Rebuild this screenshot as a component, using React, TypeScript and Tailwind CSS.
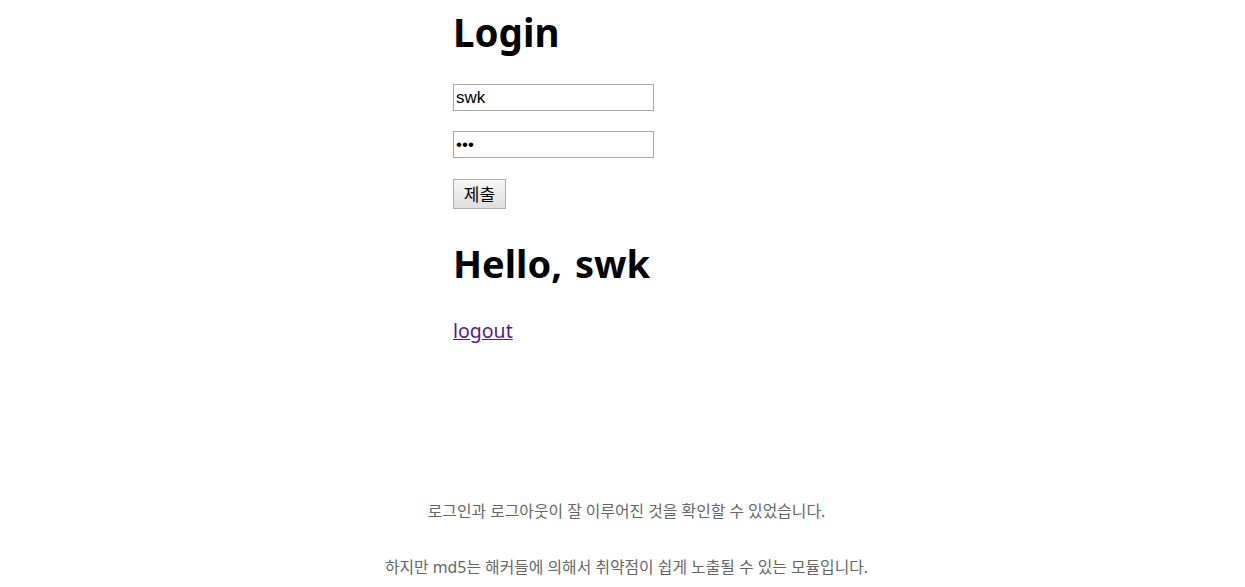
import React from "react";

export default function App() {
  const kr = { fontFamily: '"Noto Sans", "Noto Sans CJK KR", sans-serif' };
  return (
    <div className="w-[1245px] h-[587px] bg-white overflow-hidden">
      <div className="pl-[453px] pt-[4px]" style={kr}>
        <h1 className="text-[38.5px] font-bold leading-[56px] text-black">Login</h1>
        <div className="mt-[24px] flex flex-col">
          <input
            readOnly
            value="swk"
            className="w-[201px] h-[27px] border border-[#a9a9a9] px-[2px] text-[17px] text-black outline-none"
            style={{ fontFamily: '"Liberation Sans", Arial, sans-serif' }}
          />
          <input
            readOnly
            type="password"
            value="abc"
            className="mt-[20px] w-[201px] h-[27px] border border-[#a9a9a9] px-[2px] text-[17px] text-black outline-none"
            style={{ fontFamily: '"Liberation Sans", Arial, sans-serif' }}
          />
          <button
            className="mt-[21px] w-[53px] h-[30px] border border-[#adadad] bg-gradient-to-b from-[#f6f6f6] to-[#dedede] text-[17px] text-black leading-none"
            style={kr}
          >
            제출
          </button>
        </div>
        <h1 className="mt-[26px] text-[38px] font-bold leading-[56px] text-black">
          Hello, <span className="ml-[3px]">swk</span>
        </h1>
        <a href="#" className="mt-[26px] inline-block text-[19.5px] leading-[28px] text-[#551a8b] underline">
          logout
        </a>
      </div>
      <div className="mt-[154px] flex flex-col items-center text-[15.85px] text-[#666666]" style={kr}>
        <p className="leading-[24px] pl-[8px]">로그인과 로그아웃이 잘 이루어진 것을 확인할 수 있었습니다.</p>
        <p className="mt-[32px] leading-[24px] pl-[8px]">하지만 md5는 해커들에 의해서 취약점이 쉽게 노출될 수 있는 모듈입니다.</p>
      </div>
    </div>
  );
}
